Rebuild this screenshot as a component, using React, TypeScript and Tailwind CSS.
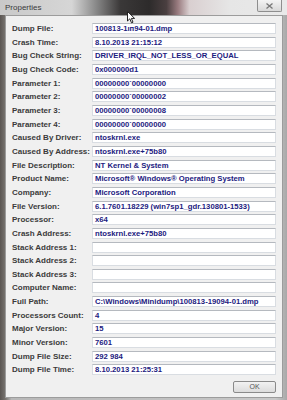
import React from "react";

const rows: [string, string][] = [
  ["Dump File:", "100813-1ıп94-01.dmp"],
  ["Crash Time:", "8.10.2013 21:15:12"],
  ["Bug Check String:", "DRIVER_IRQL_NOT_LESS_OR_EQUAL"],
  ["Bug Check Code:", "0x000000d1"],
  ["Parameter 1:", "00000000`00000000"],
  ["Parameter 2:", "00000000`00000002"],
  ["Parameter 3:", "00000000`00000008"],
  ["Parameter 4:", "00000000`00000000"],
  ["Caused By Driver:", "ntoskrnl.exe"],
  ["Caused By Address:", "ntoskrnl.exe+75b80"],
  ["File Description:", "NT Kernel & System"],
  ["Product Name:", "Microsoft® Windows® Operating System"],
  ["Company:", "Microsoft Corporation"],
  ["File Version:", "6.1.7601.18229 (win7sp1_gdr.130801-1533)"],
  ["Processor:", "x64"],
  ["Crash Address:", "ntoskrnl.exe+75b80"],
  ["Stack Address 1:", ""],
  ["Stack Address 2:", ""],
  ["Stack Address 3:", ""],
  ["Computer Name:", ""],
  ["Full Path:", "C:\\Windows\\Minidump\\100813-19094-01.dmp"],
  ["Processors Count:", "4"],
  ["Major Version:", "15"],
  ["Minor Version:", "7601"],
  ["Dump File Size:", "292 984"],
  ["Dump File Time:", "8.10.2013 21:25:31"],
];

function Cursor() {
  return (
    <svg className="absolute left-[127px] top-[11px]" width="9" height="13" viewBox="0 0 9 13">
      <path d="M0.5 0.5 L0.5 10 L2.8 7.8 L4.5 11.8 L6 11.2 L4.4 7.4 L7.6 7.4 Z" fill="#fff" stroke="#222" strokeWidth="1" />
    </svg>
  );
}

export default function App() {
  return (
    <div
      className="relative flex h-[400px] w-[287px] flex-col overflow-hidden bg-[linear-gradient(to_right,#5a5552_0%,#7a7672_2%,#b8b8b8_4%,#c8c8c8_96%,#a8a8a8_100%)]"
      style={{ fontFamily: '"Liberation Sans", Arial, sans-serif' }}
    >
      {/* title bar */}
      <div className="relative h-[15px] shrink-0 bg-[linear-gradient(to_right,#c9c9c9_0%,#d6d6d6_25%,#8d8d8d_33%,#3a3838_42%,#2d2b2b_52%,#4a3f40_58%,#9a7c80_62%,#d9cfd0_66%,#e6e6e6_80%,#e9e9e9_100%)]">
        <span className="absolute left-[5px] top-[3px] text-[8px] leading-[9px] text-[#3a3a3a]">Properties</span>
        <div className="absolute right-[5px] top-0 flex h-[12px] w-[25px] items-center justify-center rounded-b-[2px] border border-t-0 border-[#8e8e8e] bg-[linear-gradient(#f4f4f4,#d8d8d8)]">
          <svg width="7" height="6" viewBox="0 0 7 6">
            <path d="M0.5 0.5 L6.5 5.5 M6.5 0.5 L0.5 5.5" stroke="#777" strokeWidth="1.3" />
          </svg>
        </div>
      </div>

      {/* dialog body */}
      <div className="mb-[2px] ml-[5px] mr-[4px] flex flex-1 flex-col border border-[#9c9c9c] bg-[#f0f0f0] pt-[7px]">
        <div className="flex flex-col gap-[2.66px]">
          {rows.map(([label, value]) => (
            <div key={label} className="flex h-[11px] items-center">
              <span className="w-[86px] pl-[6px] text-[8px] font-bold leading-[11px] text-[#3b3b3b]">{label}</span>
              <div className="flex h-[11px] w-[184px] items-center border border-[#d9dde2] border-t-[#b5b9bf] bg-white pl-[2px]">
                <span className="whitespace-nowrap text-[7.7px] font-bold leading-[9px] text-[#1c2080]">{value}</span>
              </div>
            </div>
          ))}
        </div>
        <div className="mt-[6px] flex justify-end pr-[6px]">
          <button className="flex h-[12px] w-[43px] items-center justify-center rounded-[2px] border border-[#8a8a8a] bg-[linear-gradient(#f2f2f2,#dcdcdc)] text-[7px] leading-[8px] text-[#555]">
            OK
          </button>
        </div>
      </div>
      <Cursor />
    </div>
  );
}
